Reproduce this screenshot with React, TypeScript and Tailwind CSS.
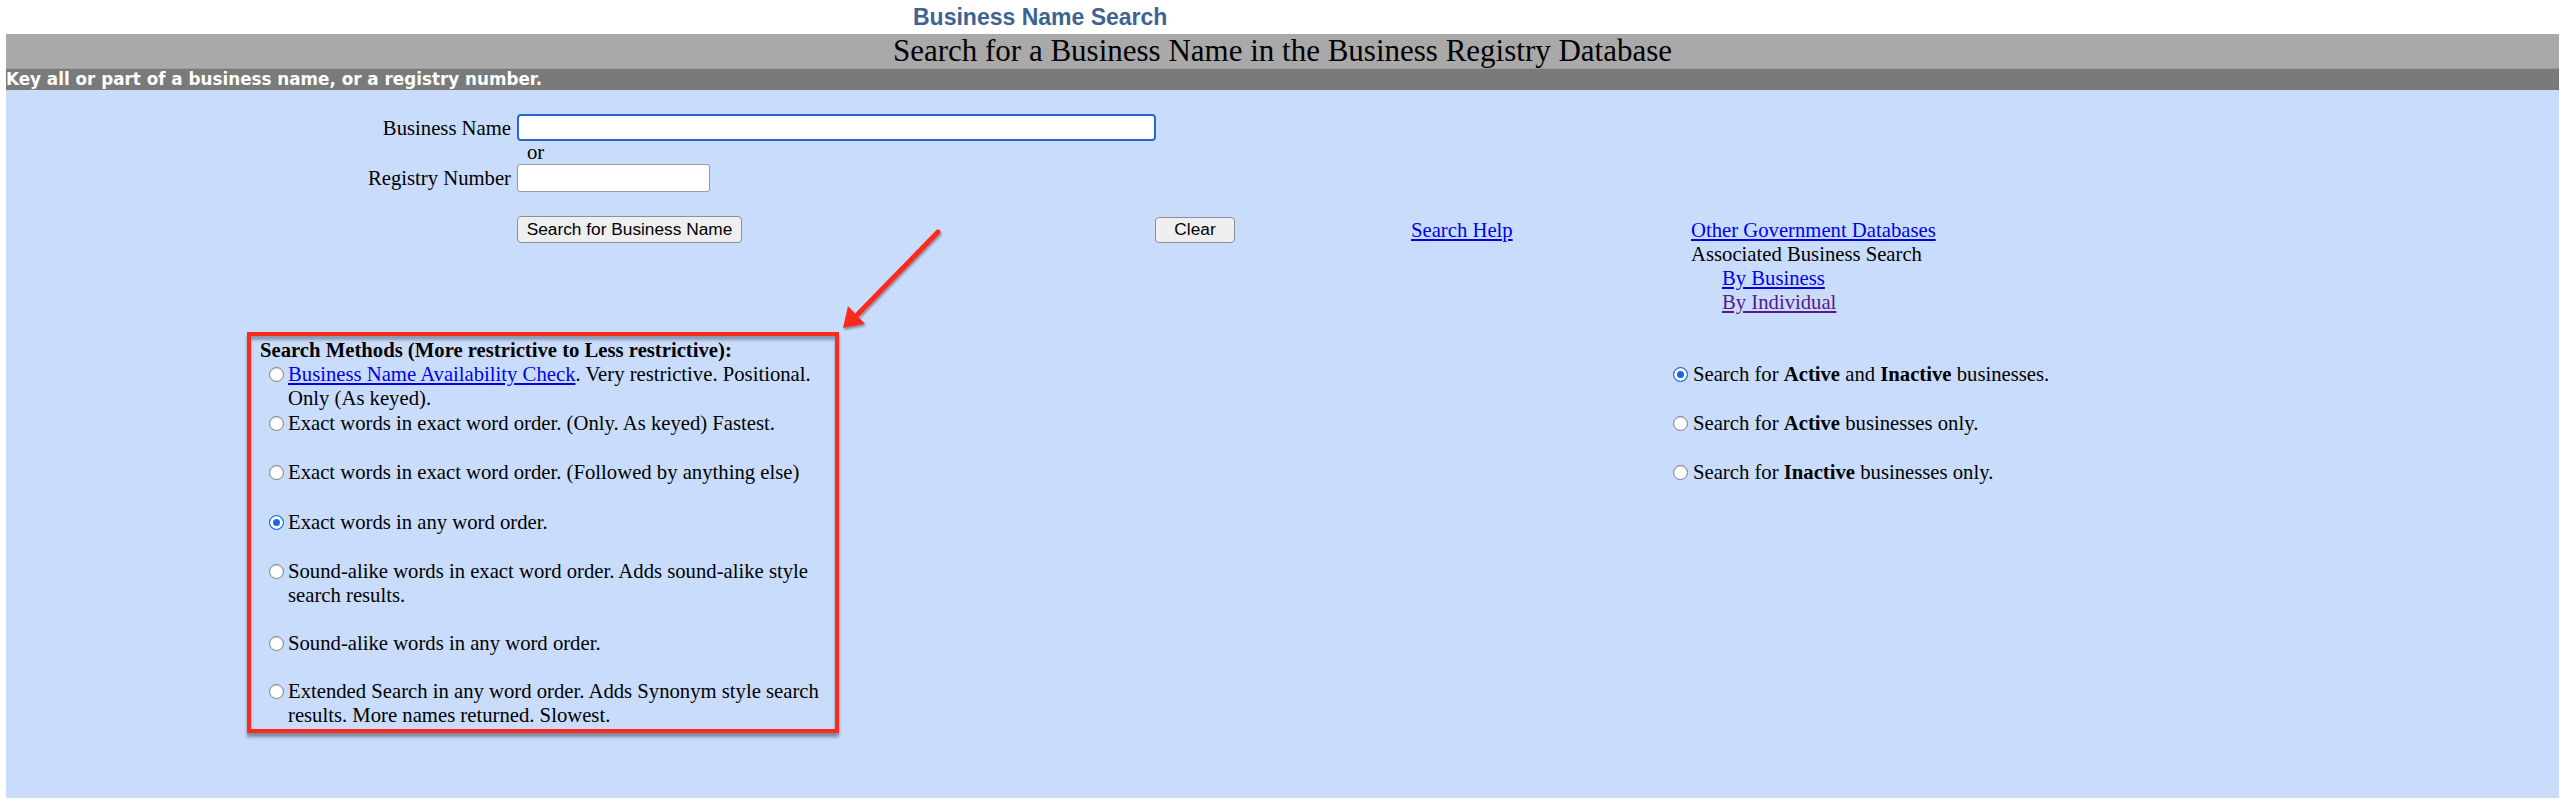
import React from 'react'

const serif = "font-['Liberation_Serif','Times_New_Roman',serif]"
const sans = "font-['Liberation_Sans',Arial,sans-serif]"

type Method = {
  id: string
  text: React.ReactNode
  checked?: boolean
  gap: string
}

const methods: Method[] = [
  {
    id: 'avail',
    text: (
      <>
        <a href="#" className="text-[#0000ee] underline">Business Name Availability Check</a>. Very restrictive. Positional. Only (As keyed).
      </>
    ),
    gap: 'mt-0'
  },
  { id: 'exact-only', text: 'Exact words in exact word order. (Only. As keyed) Fastest.', gap: 'mt-[1px]' },
  { id: 'exact-followed', text: 'Exact words in exact word order. (Followed by anything else)', gap: 'mt-[25px]' },
  { id: 'exact-any', text: 'Exact words in any word order.', checked: true, gap: 'mt-[26px]' },
  { id: 'sound-exact', text: 'Sound-alike words in exact word order. Adds sound-alike style search results.', gap: 'mt-[25px]' },
  { id: 'sound-any', text: 'Sound-alike words in any word order.', gap: 'mt-[24px]' },
  { id: 'extended', text: 'Extended Search in any word order. Adds Synonym style search results. More names returned. Slowest.', gap: 'mt-[24px]' }
]

const statuses = [
  { id: 'both', text: <>Search for <b>Active</b> and <b>Inactive</b> businesses.</>, checked: true, gap: 'mt-0' },
  { id: 'active', text: <>Search for <b>Active</b> businesses only.</>, gap: 'mt-[25px]' },
  { id: 'inactive', text: <>Search for <b>Inactive</b> businesses only.</>, gap: 'mt-[25px]' }
]

function Radio({ name, checked }: { name: string; checked?: boolean }) {
  // drawn radio: grey ring when off, blue ring + white gap + blue dot when on
  return (
    <input
      type="radio"
      name={name}
      defaultChecked={checked}
      className="appearance-none m-0 mt-[5px] w-[15px] h-[15px] shrink-0 rounded-full bg-white border border-[#7d7d7d] shadow-[inset_0_1px_1px_rgba(0,0,0,0.15)] checked:border-[#1766f0] checked:bg-[#1766f0] checked:shadow-[inset_0_0_0_3px_white]"
    />
  )
}

function Arrow() {
  // red annotation arrow pointing at the search methods box
  return (
    <svg className="absolute left-[830px] top-[220px] pointer-events-none" width="120" height="120" viewBox="0 0 120 120">
      <defs>
        <filter id="arrowShadow" x="-20%" y="-20%" width="140%" height="140%">
          <feDropShadow dx="1" dy="2" stdDeviation="1.2" floodColor="#000" floodOpacity="0.35" />
        </filter>
      </defs>
      <g filter="url(#arrowShadow)">
        <line x1="108" y1="12" x2="28" y2="94" stroke="#fb2a1b" strokeWidth="5" strokeLinecap="round" />
        <polygon points="13,108 18,86 35,104" fill="#fb2a1b" />
      </g>
    </svg>
  )
}

export default function App() {
  return (
    <div className={`relative w-[2560px] h-[804px] bg-white text-black ${serif}`}>
      <div className={`h-[34px] pl-[913px] text-[23px] leading-[34px] font-bold text-[#3d6392] ${sans}`}>
        Business Name Search
      </div>

      <div className="pl-[6px] pr-[1px]">
        <div className="h-[35px] bg-[#a9a9a9] border-b border-[#9b9b9b] text-center text-[31px] leading-[34px]">
          Search for a Business Name in the Business Registry Database
        </div>
        <div className="h-[21px] bg-[#7a7a7a] text-white font-bold text-[16.8px] leading-[21px] font-['DejaVu_Sans',Verdana,sans-serif] whitespace-nowrap">
          Key all or part of a business name, or a registry number.
        </div>

        <div className="h-[708px] bg-[#cadcfc] pt-[24px] text-[20.7px] leading-[24px]">
          {/* name / number inputs */}
          <div className="flex items-center h-[27px]">
            <label className="w-[505px] text-right">Business Name</label>
            <input
              type="text"
              className="ml-[6px] w-[639px] h-[27px] bg-white border-2 border-[#2368d8] rounded-[4px] outline-none"
            />
          </div>
          <div className="pl-[521px] leading-[23px]">or</div>
          <div className="flex items-center h-[28px]">
            <label className="w-[505px] text-right">Registry Number</label>
            <input
              type="text"
              className="ml-[6px] w-[193px] h-[28px] bg-white border border-[#9a9a9a] rounded-[3px] outline-none"
            />
          </div>

          {/* buttons and links */}
          <div className="mt-[24px] flex items-start pl-[511px]">
            <div className="w-[638px]">
              <button className={`w-[225px] h-[27px] bg-[#efefef] border border-[#8f8f8f] rounded-[4px] text-[17.3px] leading-none ${sans}`}>
                Search for Business Name
              </button>
            </div>
            <div className="w-[256px]">
              <button className={`w-[80px] h-[26px] bg-[#efefef] border border-[#8f8f8f] rounded-[4px] text-[17.3px] leading-none ${sans}`}>
                Clear
              </button>
            </div>
            <div className="w-[280px] pt-[2px]">
              <a href="#" className="text-[#0000ee] underline">Search Help</a>
            </div>
            <div className="pt-[2px] flex flex-col">
              <a href="#" className="text-[#0000ee] underline self-start">Other Government Databases</a>
              <span>Associated Business Search</span>
              <a href="#" className="ml-[31px] text-[#0000ee] underline self-start">By Business</a>
              <a href="#" className="ml-[31px] text-[#551a8b] underline self-start">By Individual</a>
            </div>
          </div>

          {/* search methods and status filters */}
          <div className="mt-[18px] flex items-start pl-[241px]">
            <div className="w-[592px] border-4 border-[#fb2a1b] pt-[2px] pb-[2px] shadow-[inset_0_4px_3px_rgba(60,70,90,0.45),0_4px_3px_rgba(60,70,90,0.55)]">
              <div className="pl-[9px] font-bold whitespace-nowrap">Search Methods (More restrictive to Less restrictive):</div>
              {methods.map((m) => (
                <div key={m.id} className={`flex items-start pl-[18px] ${m.gap}`}>
                  <Radio name="method" checked={m.checked} />
                  <div className="ml-[4px] flex-1">{m.text}</div>
                </div>
              ))}
            </div>

            <div className="ml-[834px] pt-[30px]">
              {statuses.map((s) => (
                <div key={s.id} className={`flex items-start ${s.gap}`}>
                  <Radio name="status" checked={s.checked} />
                  <div className="ml-[5px] whitespace-nowrap">{s.text}</div>
                </div>
              ))}
            </div>
          </div>
        </div>
      </div>

      <Arrow />
    </div>
  )
}
